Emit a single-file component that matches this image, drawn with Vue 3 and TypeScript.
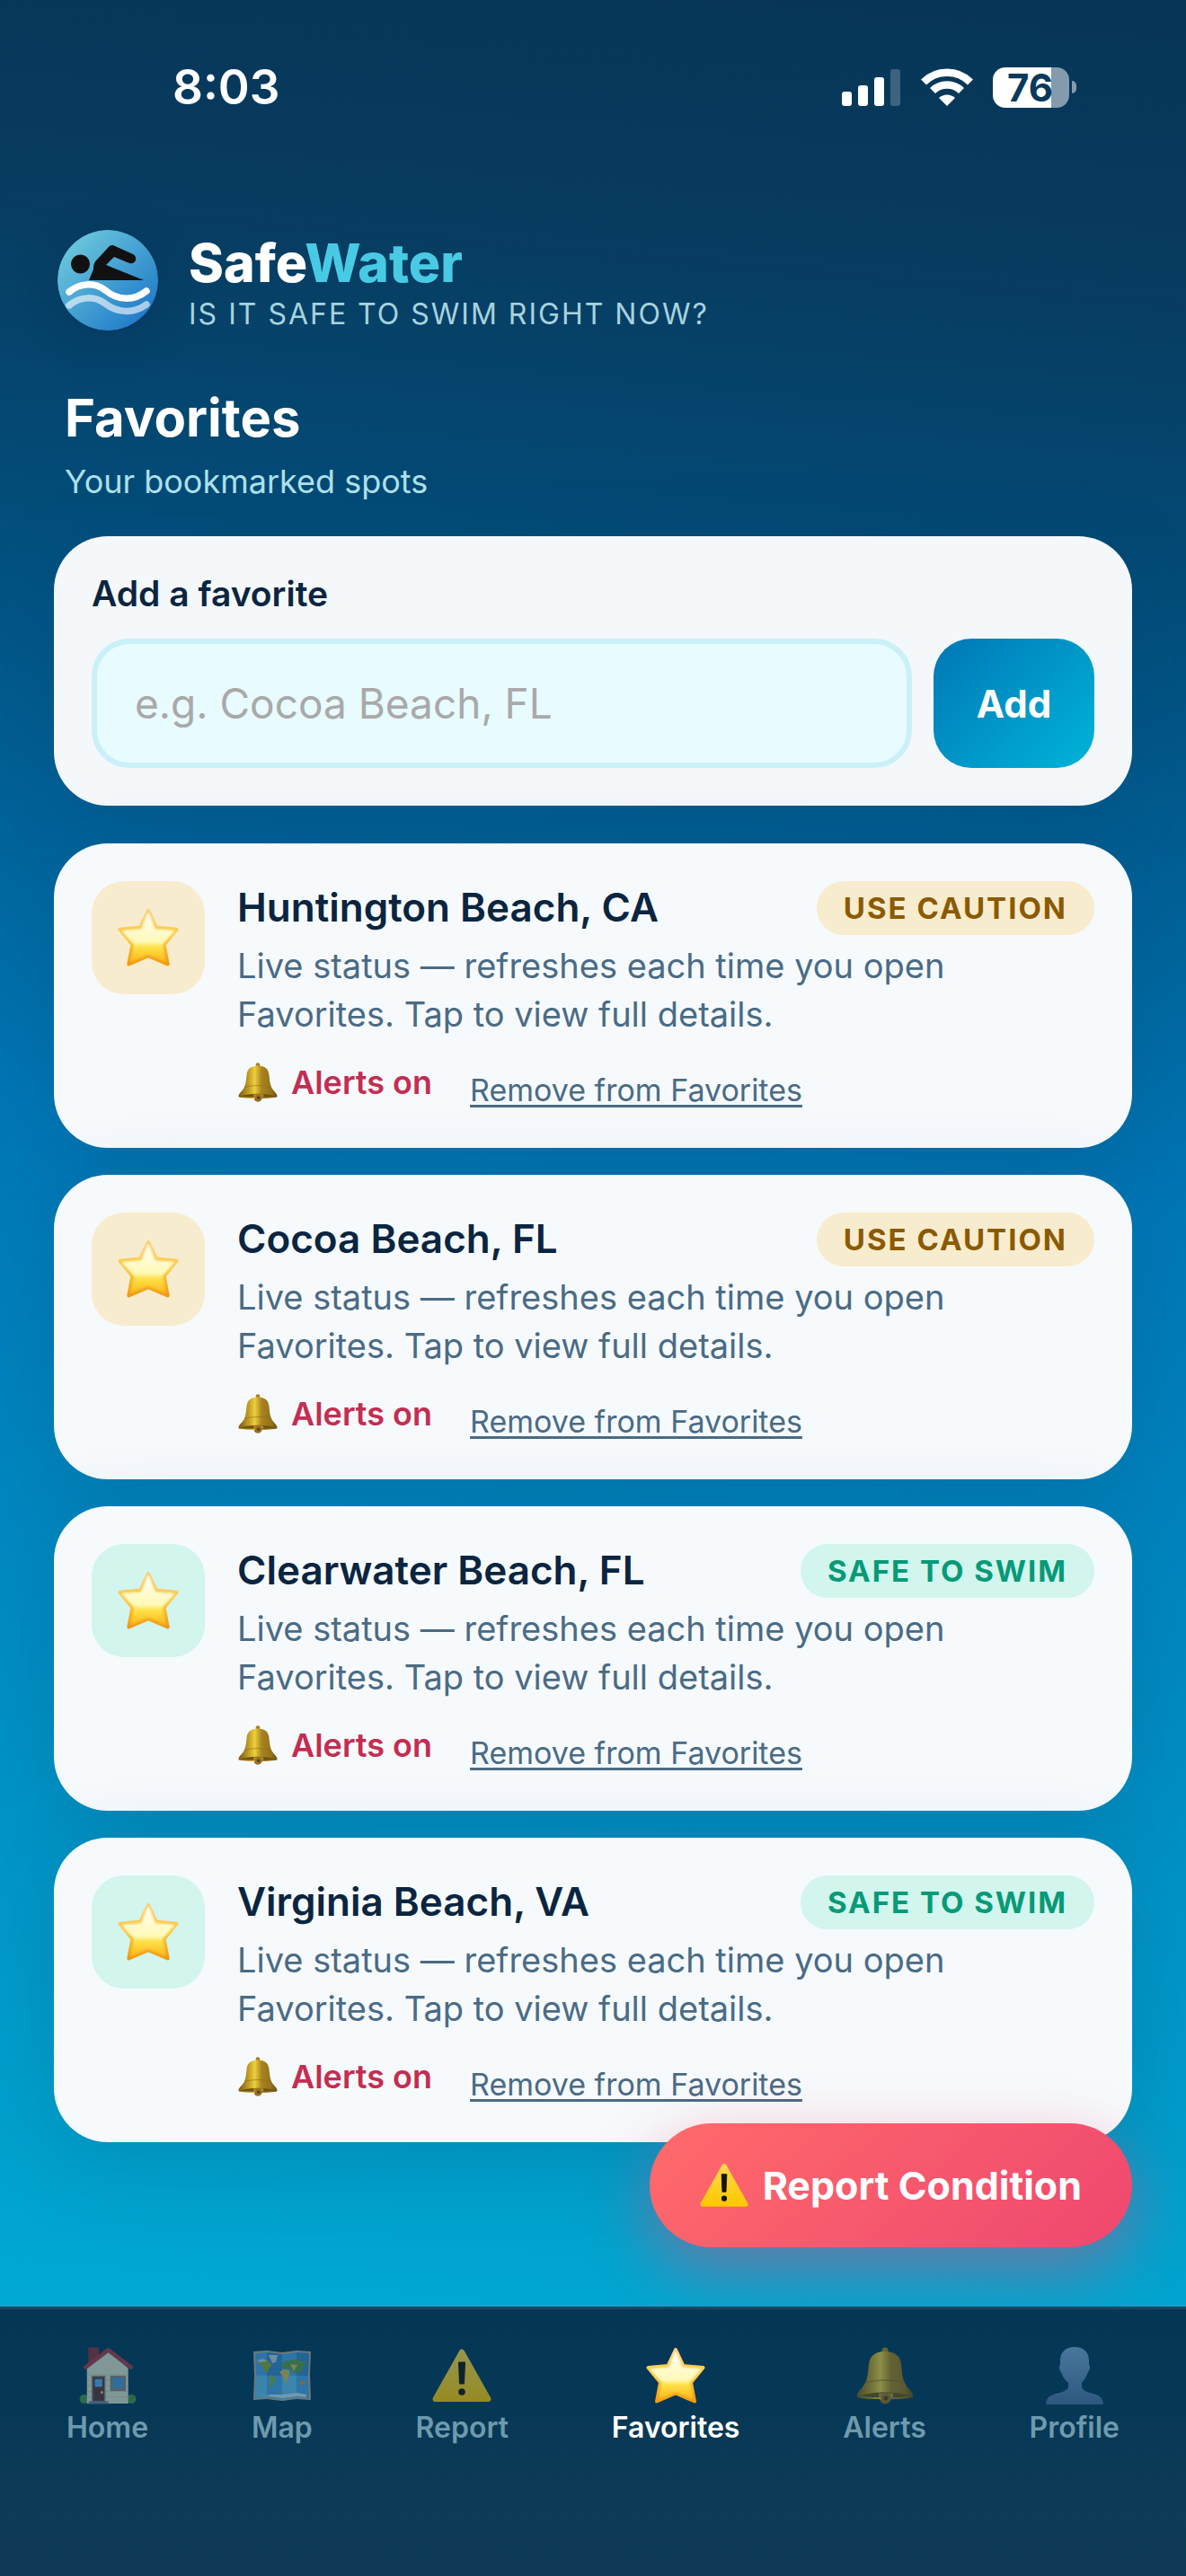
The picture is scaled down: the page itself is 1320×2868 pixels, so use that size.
<script setup lang="ts">
import { ref } from 'vue'

type Status = 'caution' | 'safe'

interface Spot {
  name: string
  status: Status
}

interface Tab {
  label: string
  icon: string
}

const statusLabel: Record<Status, string> = {
  caution: 'USE CAUTION',
  safe: 'SAFE TO SWIM',
}

const spots = ref<Spot[]>([
  { name: 'Huntington Beach, CA', status: 'caution' },
  { name: 'Cocoa Beach, FL', status: 'caution' },
  { name: 'Clearwater Beach, FL', status: 'safe' },
  { name: 'Virginia Beach, VA', status: 'safe' },
])

const tabs: Tab[] = [
  { label: 'Home', icon: 'house' },
  { label: 'Map', icon: 'map' },
  { label: 'Report', icon: 'warning' },
  { label: 'Favorites', icon: 'star' },
  { label: 'Alerts', icon: 'bell' },
  { label: 'Profile', icon: 'person' },
]

const activeTab = ref('Favorites')
const draft = ref('')

function addSpot(): void {
  const name = draft.value.trim()
  if (!name) return
  spots.value.push({ name, status: 'safe' })
  draft.value = ''
}

function removeSpot(name: string): void {
  spots.value = spots.value.filter((s) => s.name !== name)
}
</script>

<template>
  <div class="app">
    <svg class="sprite" width="0" height="0" aria-hidden="true">
      <defs>
        <linearGradient id="g-star" x1="0" y1="0" x2="0" y2="1">
          <stop offset="0" stop-color="#fffdf0" />
          <stop offset="0.6" stop-color="#fff9b8" />
          <stop offset="0.7" stop-color="#fde24a" />
          <stop offset="1" stop-color="#fdbb1c" />
        </linearGradient>
        <linearGradient id="g-star-edge" x1="0" y1="0" x2="0" y2="1">
          <stop offset="0" stop-color="#fbcf78" />
          <stop offset="0.5" stop-color="#fcc93f" />
          <stop offset="1" stop-color="#f09a12" />
        </linearGradient>
        <filter id="soft" x="-10%" y="-10%" width="120%" height="120%">
          <feGaussianBlur stdDeviation="1.2" />
        </filter>
        <linearGradient id="g-bell" x1="0" y1="0" x2="1" y2="0">
          <stop offset="0" stop-color="#7a5a10" />
          <stop offset="0.28" stop-color="#c9a228" />
          <stop offset="0.42" stop-color="#ecd03c" />
          <stop offset="0.6" stop-color="#a98320" />
          <stop offset="0.85" stop-color="#957219" />
          <stop offset="1" stop-color="#6a4f10" />
        </linearGradient>
        <linearGradient id="g-warning" x1="0" y1="0" x2="0" y2="1">
          <stop offset="0" stop-color="#ffd84a" />
          <stop offset="1" stop-color="#ffc800" />
        </linearGradient>
        <linearGradient id="g-person" x1="0" y1="0" x2="0" y2="1">
          <stop offset="0" stop-color="#7ba6cf" />
          <stop offset="1" stop-color="#4a6f9c" />
        </linearGradient>
        <linearGradient id="g-logo" x1="0" y1="0" x2="1" y2="1">
          <stop offset="0.1" stop-color="#6cc9dc" />
          <stop offset="0.9" stop-color="#1e78c8" />
        </linearGradient>
      </defs>

      <symbol id="star" viewBox="0 0 66 64">
        <path
          d="M33 3 L41.500 21 L63.500 23 L50 39.500 L54 60.500 L33 51.500 L12 60.500 L16 39.500 L2.500 23 L24.500 21 Z"
          fill="url(#g-star-edge)" stroke="url(#g-star-edge)" stroke-width="4" stroke-linejoin="round"
        />
        <path
          d="M33 6 L40 23.500 L60 25 L47.500 39 L51 57 L33 49 L15 57 L18.500 39 L6 25 L26 23.500 Z"
          fill="url(#g-star)" stroke="url(#g-star)" stroke-width="2" stroke-linejoin="round" filter="url(#soft)"
        />
      </symbol>
      <symbol id="bell" viewBox="0 0 64 64">
        <circle cx="32" cy="4" r="3.500" fill="#a8841f" />
        <circle cx="32" cy="57" r="6.500" fill="#8a651a" />
        <path
          d="M32 5 C21 5 15 10 14 19 C13 26 13 34 10 40 C7 46 2 49 1 53 C0 55 1 56 3 56.500 C18 59 46 59 61 56.500 C63 56 64 55 63 53 C62 49 57 46 54 40 C51 34 51 26 50 19 C49 10 43 5 32 5 Z"
          fill="url(#g-bell)"
        />
        <path d="M11 40 C22 36 42 36 53 40" fill="none" stroke="#8a6a16" stroke-width="1.500" opacity="0.6" />
        <path d="M4 54.500 C18 49 46 49 60 54.500 C46 57 18 57 4 54.500 Z" fill="#6d5312" />
        <path d="M25 51.500 H41 V56 H25 Z" fill="#c08a2c" />
        <circle cx="33" cy="57" r="5.500" fill="#9a7224" />
        <circle cx="33" cy="57" r="2.500" fill="#57431c" />
      </symbol>
      <symbol id="warning" viewBox="0 0 66 60">
        <path
          d="M33 3.500 L62.500 56 H3.500 Z"
          fill="url(#g-warning)" stroke="url(#g-warning)" stroke-width="6" stroke-linejoin="round"
        />
        <path d="M29.500 15 H36.500 L35.500 39 H30.500 Z" fill="#14140f" stroke="#14140f" stroke-linejoin="round" />
        <circle cx="33" cy="48" r="3.800" fill="#14140f" />
      </symbol>
      <symbol id="house" viewBox="0 0 61 62">
        <rect x="9.500" y="0.500" width="11.500" height="18" fill="#8d2f3b" />
        <circle cx="5" cy="56" r="5" fill="#4a8f46" />
        <circle cx="56" cy="56" r="5" fill="#4a8f46" />
        <path d="M31 5 L52.500 23 V61 H8 V23 Z" fill="#d9dcc8" />
        <path d="M8 30 H52 M8 36 H52 M8 42 H52 M8 48 H52 M8 54 H52" stroke="#c3c7b4" />
        <path d="M7 23 L31 5 L55 23" fill="none" stroke="#6d6f68" stroke-width="2" />
        <path d="M5 23 L31 3 L57 23" fill="none" stroke="#b03644" stroke-width="4" stroke-linejoin="round" />
        <rect x="13" y="31" width="15" height="28" fill="#8b8478" />
        <rect x="14.500" y="32.500" width="12" height="26" fill="#5e3233" />
        <rect x="16.500" y="34.500" width="8" height="8.500" fill="#5cabea" />
        <circle cx="24" cy="49" r="1.500" fill="#e6c05a" />
        <rect x="33" y="31" width="17" height="16.500" fill="#8b8478" />
        <rect x="35.500" y="33" width="12" height="11.500" fill="#4f94cf" />
        <rect x="10" y="58.500" width="21" height="3" fill="#6c7f95" />
      </symbol>
      <symbol id="map" viewBox="0 0 66 58">
        <path d="M1 2 L16 1 L33 3 L49 1 L65 2 L64 28 L65 56 L49 55 L33 57 L16 55 L1 56 L2 28 Z" fill="#b9a98c" />
        <path d="M3 4 L16 3 L33 5 L49 3 L63 4 L62 28 L63 54 L49 53 L33 55 L16 53 L3 54 L4 28 Z" fill="#4ba3e6" />
        <path d="M16 3 L33 5 V29 H16 Z M49 3 L63 4 L62 29 H49 Z" fill="#3c86c4" />
        <path d="M4 29 H16 V53 L3 54 Z M33 29 H49 V53 L33 55 Z" fill="#62bdea" />
        <path d="M5 14 L13 10 L17 12 L22 17 L18 21 L17 25 L13 25 L10 18 Z" fill="#86a83a" />
        <path d="M18 6 L28 6 L26 14 L22 15 Z M5 12 L12 10 L16 13 L8 14 Z" fill="#b5cfdb" />
        <path d="M19 28 L26 31 L23 39 L20 44 Z" fill="#7fae3c" />
        <path d="M32 18 L35 13 L45 11 L60 14 L56 19 L53 26 L50 24 L46 27 L43 22 L34 21 Z" fill="#5f9a45" />
        <path d="M30 25 L34 22 L41 23 L41 29 L37 38 L34 30 Z M42 16 L50 17 L46 24 Z" fill="#cdbb55" />
        <path d="M52 36 L58 34 L58 39 L53 39 Z" fill="#d98a3c" />
        <path d="M10 53 L20 50 L34 50 L50 48 L60 50 V53 L49 52 L33 54 L16 52 Z" fill="#c3dcee" />
      </symbol>
      <symbol id="person" viewBox="0 0 64 64">
        <path
          d="M32 0 C42 0 48 6 48 15 V20 C50 21 49 26 47 28 C45 34 42 37 40 40 V45 C42 50 50 51 56 53 C62 55 64 60 64 64 H0 C0 60 2 55 8 53 C14 51 23 50 25 45 V40 C22 37 19 34 17 28 C15 26 14 21 16 20 V15 C16 6 22 0 32 0 Z"
          fill="url(#g-person)"
        />
      </symbol>
    </svg>

    <div class="status-bar">
      <span class="clock">8:03</span>
      <div class="indicators">
        <svg width="66" height="42" viewBox="0 0 66 42" fill="#fff" aria-label="Signal">
          <rect x="0" y="26" width="11" height="16" rx="3" />
          <rect x="18" y="19" width="11" height="23" rx="3" />
          <rect x="36" y="10" width="11" height="32" rx="3" />
          <rect x="54" y="1" width="11" height="41" rx="3" opacity="0.22" />
        </svg>
        <svg width="58" height="42" viewBox="0 0 58 42" aria-label="Wi-Fi">
          <path d="M3 15.500 A37 37 0 0 1 55 15.500" fill="none" stroke="#fff" stroke-width="8.500" />
          <path d="M13 25 A23 23 0 0 1 45 25" fill="none" stroke="#fff" stroke-width="8.500" />
          <path d="M29 42 L20 33 A13 13 0 0 1 38 33 Z" fill="#fff" />
        </svg>
        <div class="battery"><span class="cell">76</span><i class="nub"></i></div>
      </div>
    </div>

    <main class="screen">
      <header class="brand">
        <svg class="logo" viewBox="0 0 112 112" aria-hidden="true">
          <circle cx="56" cy="56" r="56" fill="url(#g-logo)" />
          <circle cx="25.500" cy="38" r="10.500" fill="#111" />
          <path
            d="M35 56 L40 44 C40 38 41 36 44 33 L56 20 C58 17 61 16 64 18 L84 27 C90 30 87 39 80 37 L63 30 L54 39 L96 56 Z"
            fill="#111"
          />
          <path d="M13 69 C25 59 41 58 53 67 C66 78 84 80 99 68" fill="none" stroke="#fff" stroke-width="7.500" stroke-linecap="round" />
          <path d="M13 84 C25 74 41 73 53 82 C66 92 84 94 99 83" fill="none" stroke="#fff" stroke-width="7.500" stroke-linecap="round" opacity="0.6" />
        </svg>
        <div class="brand-text">
          <div class="brand-name">Safe<span>Water</span></div>
          <div class="tagline">IS IT SAFE TO SWIM RIGHT NOW?</div>
        </div>
      </header>

      <div class="heading">
        <h1>Favorites</h1>
        <p>Your bookmarked spots</p>
      </div>

      <form class="panel add-form" @submit.prevent="addSpot">
        <label for="spot">Add a favorite</label>
        <div class="add-row">
          <input id="spot" v-model="draft" type="text" placeholder="e.g. Cocoa Beach, FL" />
          <button type="submit">Add</button>
        </div>
      </form>

      <div class="spots">
        <article v-for="spot in spots" :key="spot.name" class="panel spot" :class="spot.status">
          <div class="badge-icon">
            <svg width="68" height="66"><use href="#star" /></svg>
          </div>
          <div class="spot-body">
            <div class="spot-head">
              <h2>{{ spot.name }}</h2>
              <span class="pill">{{ statusLabel[spot.status] }}</span>
            </div>
            <p>Live status — refreshes each time you open Favorites. Tap to view full details.</p>
            <div class="actions">
              <button type="button" class="alerts">
                <svg width="46" height="44"><use href="#bell" /></svg>Alerts on
              </button>
              <button type="button" class="remove" @click="removeSpot(spot.name)">Remove from Favorites</button>
            </div>
          </div>
        </article>
      </div>

      <button type="button" class="report">
        <svg width="54" height="50"><use href="#warning" /></svg>Report Condition
      </button>
    </main>

    <nav class="tabs">
      <a
        v-for="tab in tabs"
        :key="tab.label"
        href="#"
        :class="{ active: tab.label === activeTab }"
        @click.prevent="activeTab = tab.label"
      >
        <svg width="66" height="64"><use :href="'#' + tab.icon" /></svg>
        <span>{{ tab.label }}</span>
      </a>
    </nav>
  </div>
</template>

<style>
body {
  margin: 0;
}
</style>

<style scoped>
.app {
  display: flex;
  flex-direction: column;
  min-height: 100vh;
  background: linear-gradient(185deg, #063556 0%, #083c60 11%, #034a76 21%, #0077b6 45%, #00b4d8 100%);
  font-family: Inter, "Liberation Sans", sans-serif;
  color: #0a2540;
}
.sprite {
  position: absolute;
}
h1,
h2,
p {
  margin: 0;
}
button {
  border: 0;
  padding: 0;
  background: none;
  font-family: inherit;
  color: inherit;
  cursor: pointer;
}

/* Device status bar */
.status-bar {
  display: flex;
  align-items: center;
  justify-content: space-between;
  height: 194px;
  padding: 0 122px 0 192px;
  color: #fff;
}
.clock {
  font-size: 53px;
  font-weight: 600;
}
.indicators {
  display: flex;
  align-items: center;
  gap: 22px;
}
.battery {
  display: flex;
  align-items: center;
  gap: 3px;
}
.cell {
  box-sizing: border-box;
  width: 85px;
  height: 45px;
  padding-left: 16px;
  border-radius: 14px;
  background: linear-gradient(90deg, #fff 65px, #849bae 65px);
  color: #083a5c;
  font-size: 42px;
  font-weight: 700;
  line-height: 45px;
}
.nub {
  width: 5px;
  height: 14px;
  border-radius: 0 6px 6px 0;
  background: #849bae;
}

/* Screen content */
.screen {
  position: relative;
  flex: 1;
  padding: 62px 60px 183px;
}
.brand {
  display: flex;
  align-items: flex-start;
  gap: 34px;
  padding-left: 4px;
}
.logo {
  width: 112px;
  height: 112px;
  border-radius: 50%;
  box-shadow: 0 12px 48px rgba(10, 40, 80, 0.3);
}
.brand-name {
  color: #fff;
  font-size: 59px;
  font-weight: 800;
  line-height: 74px;
}
.brand-name span {
  color: #48cae4;
}
.tagline {
  color: #a6d3df;
  font-size: 32px;
  line-height: 40px;
  letter-spacing: 2px;
}
.heading {
  padding: 60px 12px 36px;
}
.heading h1 {
  color: #fff;
  font-size: 58px;
  font-weight: 700;
  line-height: 70px;
}
.heading p {
  margin-top: 11px;
  color: #ade0ea;
  font-size: 36px;
  line-height: 50px;
}
.panel {
  padding: 42px;
  border-radius: 60px;
  background: #f6fafd;
  box-shadow: 0 24px 96px rgba(3, 62, 100, 0.2);
}
.add-form {
  background: #f4f8fb;
}
.add-form label {
  display: block;
  font-size: 39px;
  font-weight: 600;
  line-height: 44px;
}
.add-row {
  display: flex;
  gap: 24px;
  margin-top: 28px;
}
.add-row input {
  box-sizing: border-box;
  flex: 1;
  min-width: 0;
  height: 144px;
  padding: 0 42px;
  border: 6px solid #caf0f8;
  border-radius: 42px;
  background: #e8fbff;
  color: #0a2540;
  font-family: inherit;
  font-size: 46px;
}
.add-row input::placeholder {
  color: #a9a9a9;
  opacity: 1;
}
.add-row button {
  width: 179px;
  border-radius: 42px;
  background: linear-gradient(135deg, #0077b6, #00b4d8);
  color: #fff;
  font-size: 42px;
  font-weight: 700;
}

.spots {
  display: flex;
  flex-direction: column;
  gap: 30px;
  margin-top: 42px;
}
.spot {
  display: flex;
  gap: 36px;
}
.badge-icon {
  display: flex;
  flex: none;
  align-items: center;
  justify-content: center;
  width: 126px;
  height: 126px;
  border-radius: 36px;
}
.spot-body {
  flex: 1;
  min-width: 0;
}
.spot-head {
  display: flex;
  align-items: flex-start;
  justify-content: space-between;
}
.spot h2 {
  font-size: 44px;
  font-weight: 600;
  line-height: 58px;
}
.pill {
  padding: 0 30px;
  border-radius: 30px;
  font-size: 33px;
  font-weight: 700;
  line-height: 60px;
  letter-spacing: 2px;
  white-space: nowrap;
}
.caution .badge-icon,
.caution .pill {
  background: #f8ecce;
}
.caution .pill {
  color: #8b5a00;
}
.safe .badge-icon,
.safe .pill {
  background: #d2f5ee;
}
.safe .pill {
  color: #069a77;
}
.spot p {
  max-width: 840px;
  margin-top: 7px;
  color: #4a6b85;
  font-size: 38px;
  line-height: 54px;
}
.actions {
  display: flex;
  align-items: flex-start;
  gap: 42px;
  height: 56px;
  margin-top: 24px;
}
.alerts {
  display: flex;
  align-items: center;
  gap: 14px;
  color: #c42d51;
  font-size: 36px;
  font-weight: 600;
  line-height: 50px;
}
.remove {
  align-self: flex-end;
  color: #4a6b85;
  font-size: 34px;
  line-height: 44px;
  text-decoration: underline;
  text-decoration-thickness: 3px;
  text-underline-offset: 4px;
}

/* Floats over the list */
.report {
  position: absolute;
  right: 60px;
  bottom: 66px;
  display: flex;
  align-items: center;
  gap: 16px;
  height: 138px;
  padding: 0 56px;
  border-radius: 69px;
  background: linear-gradient(135deg, #ff6b6b, #ef476f);
  box-shadow: 0 24px 72px rgba(239, 71, 111, 0.45);
  color: #fff;
  font-size: 43px;
  font-weight: 700;
}

/* Bottom navigation */
.tabs {
  box-sizing: border-box;
  display: flex;
  justify-content: space-between;
  height: 300px;
  padding: 42px 74px 0;
  border-top: 3px solid #1a4661;
  background: linear-gradient(180deg, #043755 0%, #053756 30%, #0e3b57 75%, #0f3a57 100%);
  position: relative;
}
.tabs a {
  display: flex;
  flex-direction: column;
  align-items: center;
  gap: 6px;
  color: #6e9aad;
  font-size: 32px;
  font-weight: 600;
  line-height: 40px;
  text-decoration: none;
}
.tabs svg {
  opacity: 0.58;
}
.tabs a.active {
  color: #fff;
}
.tabs a.active svg {
  opacity: 1;
}
</style>
